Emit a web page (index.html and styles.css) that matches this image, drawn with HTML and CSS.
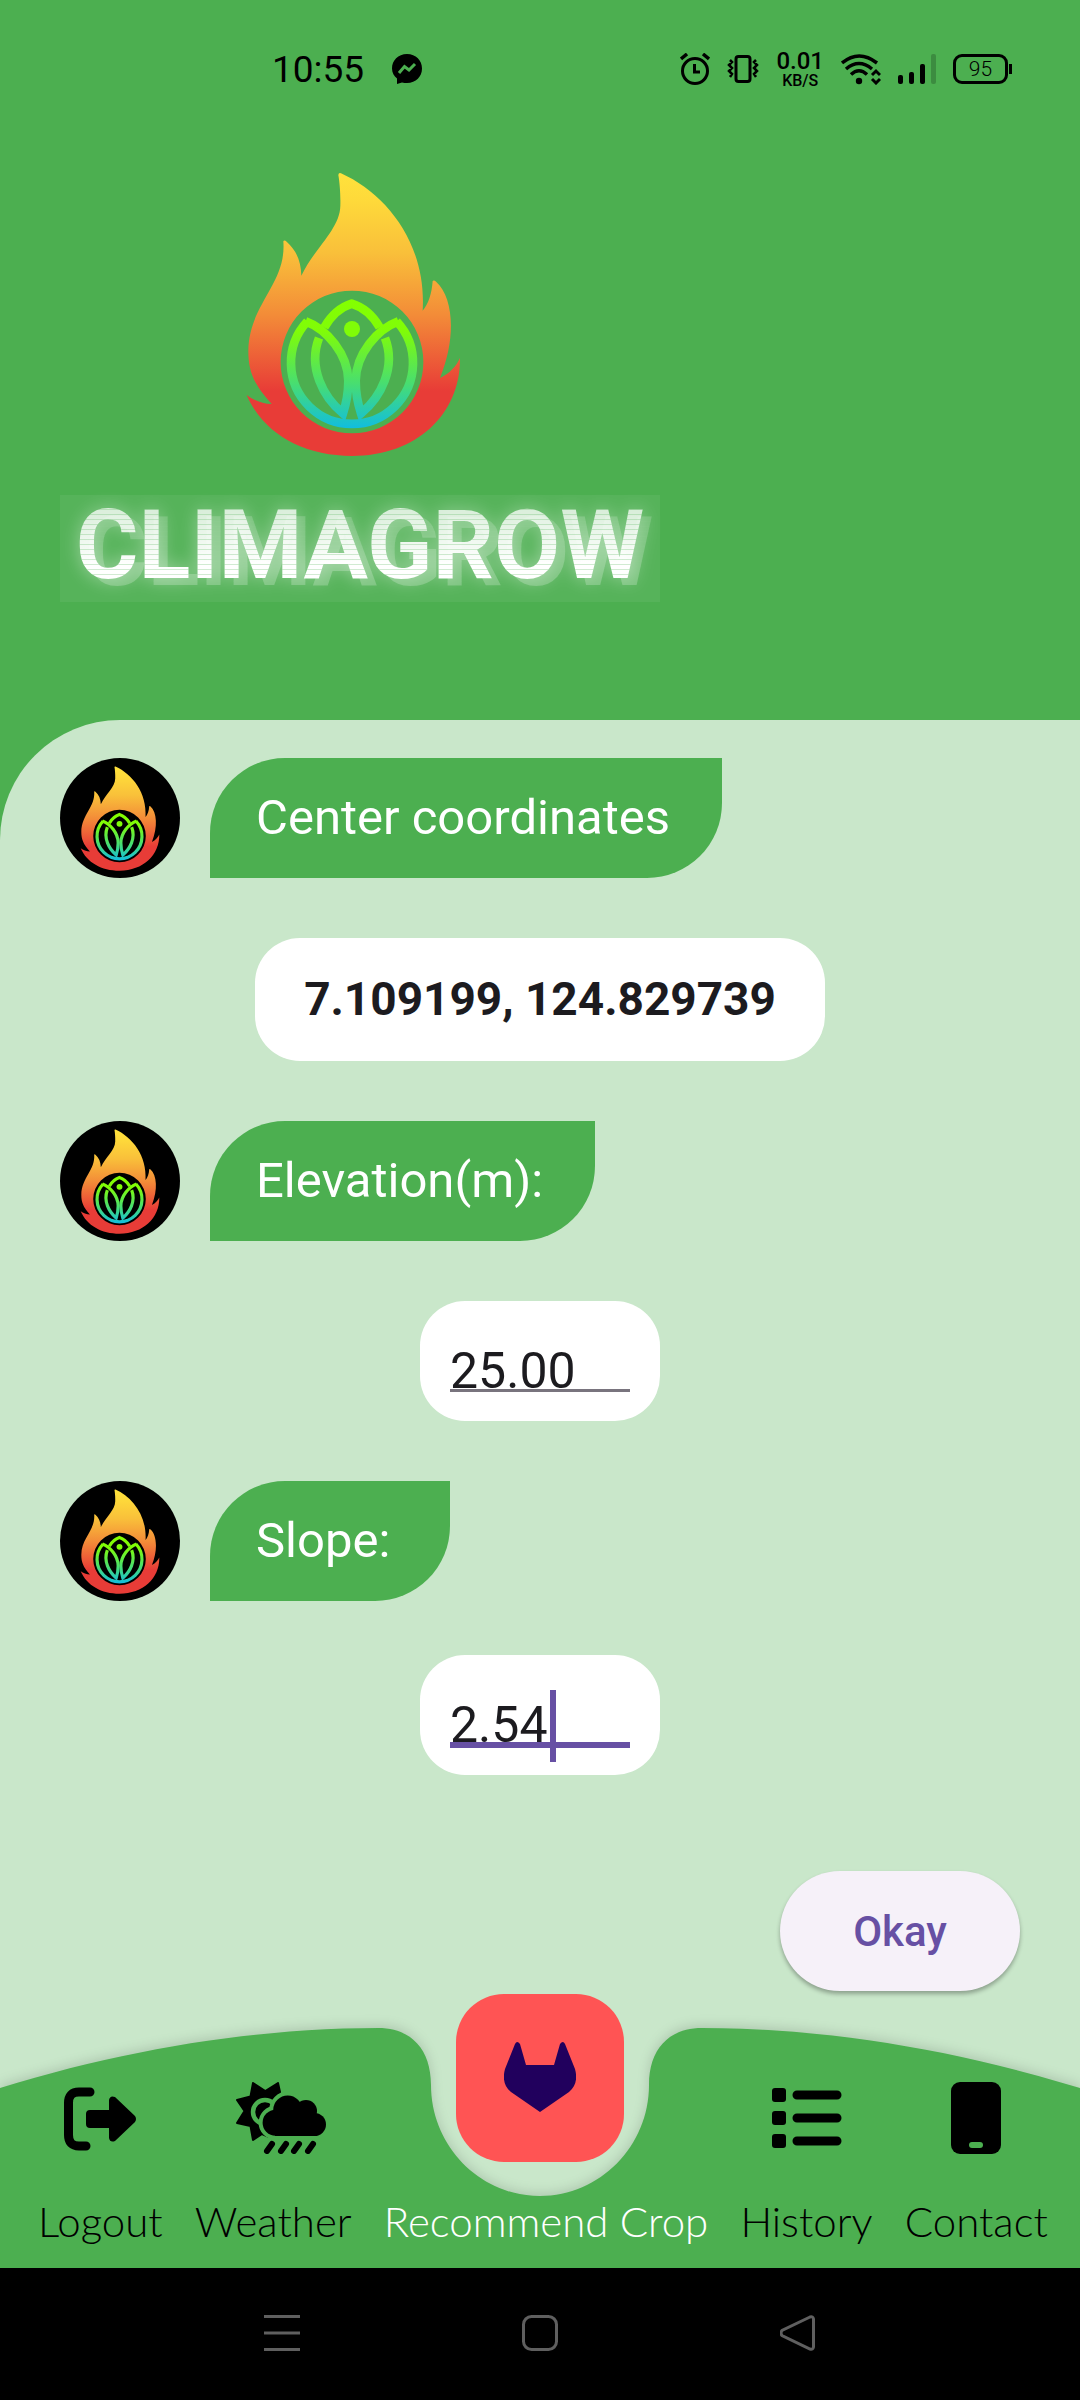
FILE: index.html
```html
<!DOCTYPE html>
<html lang="en">
<head>
<meta charset="utf-8">
<meta name="viewport" content="width=device-width, initial-scale=1">
<title>ClimaGrow</title>
<link rel="stylesheet" href="styles.css">
</head>
<body>
<svg class="defs" aria-hidden="true">
  <defs>
    <linearGradient id="fire" gradientUnits="userSpaceOnUse" x1="0" y1="67" x2="0" y2="916">
      <stop offset="0" stop-color="#ffe23c"/>
      <stop offset=".1" stop-color="#fed93a"/>
      <stop offset=".28" stop-color="#f9c03a"/>
      <stop offset=".5" stop-color="#f38c38"/>
      <stop offset=".77" stop-color="#e83c37"/>
      <stop offset="1" stop-color="#e83c37"/>
    </linearGradient>
    <linearGradient id="leaf" gradientUnits="userSpaceOnUse" x1="0" y1="445" x2="0" y2="834">
      <stop offset="0" stop-color="#84ff00"/>
      <stop offset=".25" stop-color="#80fc08"/>
      <stop offset=".65" stop-color="#48de70"/>
      <stop offset="1" stop-color="#10bde0"/>
    </linearGradient>
    <g id="flame">
      <path fill="url(#fire)" fill-rule="evenodd" d="M355 73Q356 65 363 68C500 130 620 280 608 480C625 460 635 430 638 391Q642 387 649 394C700 440 710 560 660 682C690 668 710 645 720 622C722 790 590 916 396 916C250 916 130 850 80 733C100 748 128 760 155 760C100 700 85 660 85 600C87 460 200 400 190 272Q193 267 200 273C228 298 243 330 244 375C285 290 360 235 361 165C362 130 359 95 355 73ZM396 420A214 214 0 1 0 396 848A214 214 0 1 0 396 420Z"/>
      <g fill="none" stroke="url(#leaf)" stroke-width="26">
        <path d="M262 512A183 183 0 1 0 530 512"/>
        <path d="M257 512C320 535 384 610 385 690C385 725 380 755 369 788C310 740 263 650 297 562"/>
        <path d="M535 512C472 535 408 610 407 690C407 725 412 755 423 788C482 740 529 650 495 562"/>
        <path d="M313 530Q345 475 395 459Q447 475 479 530"/>
      </g>
      <circle cx="396" cy="535" r="24" fill="#80fc08"/>
    </g>
  </defs>
</svg>

<div class="app">
  <header class="header">
    <div class="status">
      <div class="status-left">
        <time>10:55</time>
        <svg width="30" height="30" viewBox="0 0 30 30"><path d="M15 0C6 0 0 6.500 0 14.500C0 19 2 22 5 24.500V30L10 28.500Q12.500 29 15 29C24 29 30 22.500 30 14.500S24 0 15 0Z"/><path d="M7 19L12.500 12.500L17 16L23 10" fill="none" stroke="#4caf50" stroke-width="3"/></svg>
      </div>
      <div class="status-right">
        <svg width="30" height="32" viewBox="0 0 30 32" fill="none" stroke="#000" stroke-width="3"><circle cx="15" cy="18" r="12.500"/><path d="M14.500 11V19H20"/><path d="M1 6L7 1M29 6L23 1" stroke-width="3.500"/></svg>
        <svg width="32" height="28" viewBox="0 0 32 28" fill="none" stroke="#000" stroke-width="3"><rect x="9" y="1.500" width="14" height="25" rx="2.500"/><path stroke-width="2.500" d="M3 5L5 7L2 10L5 13L2 16L5 19L3 22M29 5L27 7L30 10L27 13L30 16L27 19L29 22"/></svg>
        <div class="speed"><span class="speed-value">0.01</span><span class="speed-unit">KB/S</span></div>
        <svg width="40" height="31" viewBox="0 0 40 31" fill="none" stroke="#000" stroke-width="3.500"><path d="M1 9Q18 -5 36 9M5 15Q18 4 31 15M10 20.500Q18 13 26 20.500"/><circle cx="18" cy="27" r="3.200" fill="#000" stroke="none"/><path stroke-width="3" d="M31 21L35 17L39 21M31 25L35 29L39 25"/></svg>
        <svg width="38" height="30" viewBox="0 0 38 30"><rect y="21" width="5" height="9" rx="2"/><rect x="11" y="18" width="5" height="12" rx="2"/><rect x="22" y="10" width="5" height="20" rx="2"/><rect x="33" width="5" height="30" rx="2" fill-opacity=".2"/></svg>
        <div class="battery">95</div>
      </div>
    </div>
    <div class="brand">
      <svg class="brand-flame" viewBox="75 64 690 855" role="img" aria-label="Flame logo"><use href="#flame"/></svg>
      <h1 class="wordmark"><span>CLIMAGROW</span></h1>
    </div>
  </header>

  <div class="stage">
    <main class="panel">
      <form class="chat">
        <section class="exchange">
          <div class="message">
            <div class="avatar"><svg viewBox="75 64 650 855"><use href="#flame"/></svg></div>
            <p class="bubble">Center coordinates</p>
          </div>
          <output class="answer coords">7.109199, 124.829739</output>
        </section>
        <section class="exchange">
          <div class="message">
            <div class="avatar"><svg viewBox="75 64 650 855"><use href="#flame"/></svg></div>
            <label class="bubble" for="elevation">Elevation(m):</label>
          </div>
          <div class="answer field"><input id="elevation" type="text" inputmode="decimal" value="25.00"></div>
        </section>
        <section class="exchange exchange-current">
          <div class="message">
            <div class="avatar"><svg viewBox="75 64 650 855"><use href="#flame"/></svg></div>
            <label class="bubble" for="slope">Slope:</label>
          </div>
          <div class="answer field field-focused"><input id="slope" type="text" inputmode="decimal" value="2.54"><span class="caret"></span></div>
        </section>
        <button class="okay" type="button">Okay</button>
      </form>

      <nav class="tabs">
        <svg class="tabs-shape" viewBox="0 0 1080 240" preserveAspectRatio="none"><path d="M0 60C130 20 260 0 378 0C412 0 431 22 431 57C431 118 480 168 540 168C600 168 649 118 649 57C649 22 668 0 702 0C820 0 950 20 1080 60V240H0Z" fill="#4caf50"/></svg>
        <a class="tab" href="#logout">
          <svg width="72" height="72" viewBox="0 0 72 72"><path d="M26 10H15Q4.500 10 4.500 21V53Q4.500 64 15 64H22" fill="none" stroke="#000" stroke-width="9" stroke-linecap="round"/><path d="M26 28H45V18Q46 13 51 15L71 34Q73 37 71 40L51 59Q46 61 45 56V46H26Q22 46 22 42V32Q22 28 26 28Z"/></svg>
          Logout
        </a>
        <a class="tab" href="#weather">
          <svg width="107" height="72" viewBox="-16 0 107 72"><path stroke="#000" stroke-width="2" stroke-linejoin="round" d="M17 1L29.300 9L42 1L44 10L40 58L26 52L17 58L14.500 44L1 41L8.500 29L1 18L14.500 14.500Z"/><circle cx="29" cy="30" r="12" stroke="#4caf50" stroke-width="4.500"/><g stroke="#4caf50" stroke-width="9"><circle cx="39.600" cy="40.700" r="12.500"/><circle cx="51.700" cy="28" r="14"/></g><path fill="#4caf50" d="M36 54H60V62H22Z"/><circle cx="39.600" cy="40.700" r="13"/><circle cx="51.700" cy="28" r="14.500"/><circle cx="70" cy="29" r="11"/><circle cx="78.500" cy="42.500" r="11.500"/><rect x="39" y="28" width="40" height="26"/><path d="M36 62L31 69M50 62L45 69M63 62L58 69M77 62L72 69" stroke="#000" stroke-width="6" stroke-linecap="round"/></svg>
          Weather
        </a>
        <a class="tab tab-active" href="#recommend" aria-current="page">
          <span class="fab"><svg width="72" height="72" viewBox="0 0 72 72"><path fill="#21005d" d="M11 2Q13-2 16 2L22 23H50L56 2Q59-2 61 2L71 27Q75 42 65 50L36 70L7 50Q-3 42 1 27Z"/></svg></span>
          Recommend Crop
        </a>
        <a class="tab" href="#history">
          <svg width="72" height="72" viewBox="0 0 72 72"><g><rect x="1" y="6" width="14" height="14" rx="3"/><rect x="1" y="29" width="14" height="14" rx="3"/><rect x="1" y="52" width="14" height="14" rx="3"/></g><path d="M26 13H66M26 36H66M26 59H66" stroke="#000" stroke-width="9" stroke-linecap="round"/></svg>
          History
        </a>
        <a class="tab" href="#contact">
          <svg width="72" height="72" viewBox="0 0 72 72"><rect x="11" width="50" height="72" rx="9"/><rect x="29" y="60" width="14" height="6" rx="3" fill="#4caf50"/></svg>
          Contact
        </a>
      </nav>
    </main>
  </div>

  <footer class="system">
    <button type="button" aria-label="Recent apps"><svg width="36" height="36" viewBox="0 0 36 36"><path d="M0 1.500H36M0 18H36M0 34.500H36"/></svg></button>
    <button type="button" aria-label="Home"><svg width="36" height="36" viewBox="0 0 36 36"><rect x="1.500" y="1.500" width="33" height="33" rx="8"/></svg></button>
    <button type="button" aria-label="Back"><svg width="36" height="36" viewBox="0 0 36 36"><path d="M30 2L2 15.500Q0 18 2 20.500L30 34Q33 35 33.500 32V4Q33 1 30 2Z"/></svg></button>
  </footer>
</div>
</body>
</html>
```
FILE: styles.css
```css
* {
  box-sizing: border-box;
}

body {
  margin: 0;
  font-family: Roboto, "Noto Sans", sans-serif;
  color: #1c1b1f;
}

.defs {
  position: absolute;
  width: 0;
  height: 0;
}

.app {
  display: flex;
  flex-direction: column;
  min-height: 100vh;
}

/* Header */
.header {
  background: #4caf50;
  padding-bottom: 118px;
}

.status {
  display: flex;
  justify-content: space-between;
  align-items: center;
  height: 138px;
  padding: 0 72px 0 272px;
  color: #000;
}

.status-left,
.status-right {
  display: flex;
  align-items: center;
}

.status-left {
  gap: 28px;
  font-size: 37px;
}

.status-right {
  gap: 17px;
}

.speed {
  display: flex;
  flex-direction: column;
  align-items: center;
  font-weight: 500;
}

.speed-value {
  font-size: 24px;
  line-height: 24px;
}

.speed-unit {
  font-size: 16px;
  line-height: 16px;
}

.battery {
  position: relative;
  width: 55px;
  height: 30px;
  border: 3px solid #000;
  border-radius: 9px;
  font-size: 21px;
  font-weight: 300;
  line-height: 24px;
  text-align: center;
}

.battery::after {
  content: "";
  position: absolute;
  right: -7px;
  top: 7px;
  width: 3px;
  height: 10px;
  background: #000;
}

.brand {
  display: flex;
  flex-direction: column;
  align-items: center;
  gap: 38px;
  width: 600px;
  max-width: 100%;
  margin: 34px 0 0 60px;
}

.brand-flame {
  width: 230px;
  height: 285px;
}

.wordmark {
  width: 100%;
  margin: 0;
  padding-bottom: 7px;
  background: rgba(255, 255, 255, .06);
  font-size: 96px;
  font-weight: 700;
  line-height: 100px;
  text-align: center;
}

.wordmark span {
  display: block;
  color: transparent;
  background: repeating-linear-gradient(transparent 0 4px, rgba(76, 175, 80, .25) 4px 5px),
    linear-gradient(rgba(255, 255, 255, .75) 20%, #fff 70%);
  -webkit-background-clip: text;
  background-clip: text;
  filter: drop-shadow(9px 7px 0 rgba(255, 255, 255, .22)) drop-shadow(0 0 9px rgba(255, 255, 255, .45));
}

/* Conversation */
.stage {
  display: flex;
  flex: 1;
  background: #4caf50;
}

.panel {
  display: flex;
  flex: 1;
  flex-direction: column;
  justify-content: space-between;
  gap: 36px;
  padding-top: 38px;
  background: #c9e7ca;
  border-top-left-radius: 120px;
}

.chat,
.exchange {
  display: flex;
  flex-direction: column;
  gap: 60px;
}

.chat {
  padding: 0 60px;
}

.exchange-current {
  gap: 54px;
}

.message {
  display: flex;
  gap: 30px;
}

.avatar {
  display: flex;
  align-items: center;
  justify-content: center;
  width: 120px;
  height: 120px;
  border-radius: 50%;
  background: #000;
}

.avatar svg {
  width: 80px;
  height: 105px;
}

.bubble {
  min-width: 240px;
  margin: 0;
  padding: 0 52px 0 46px;
  border-radius: 75px 0;
  background: #4caf50;
  color: #fff;
  font-size: 49px;
  line-height: 120px;
}

.answer {
  align-self: center;
  border-radius: 45px;
  background: #fff;
}

.coords {
  padding: 0 49px;
  font-size: 46px;
  font-weight: 700;
  line-height: 123px;
}

.field {
  position: relative;
  width: 240px;
  height: 120px;
  padding: 40px 30px 0;
}

.field input {
  display: block;
  width: 100%;
  height: 60px;
  padding: 0;
  border: 0;
  outline: 0;
  background: linear-gradient(#79747e, #79747e) no-repeat 0 48px / 100% 3px;
  color: inherit;
  font: inherit;
  font-size: 50px;
}

.field-focused input {
  background: linear-gradient(#6750a4, #6750a4) no-repeat 0 47px / 100% 6px;
}

.caret {
  position: absolute;
  left: 130px;
  top: 35px;
  width: 6px;
  height: 72px;
  background: #6750a4;
}

.okay {
  align-self: flex-end;
  width: 240px;
  height: 120px;
  margin-top: 36px;
  border: 0;
  border-radius: 60px;
  background: #f6f1f9;
  box-shadow: 0 3px 4px rgba(0, 0, 0, .3);
  color: #6750a4;
  font: 500 42px Roboto, sans-serif;
}

/* Bottom tabs */
.tabs {
  position: relative;
  isolation: isolate;
  display: flex;
  justify-content: space-evenly;
  height: 240px;
  padding: 54px 0 0 6px;
}

.tabs-shape {
  position: absolute;
  z-index: -1;
  inset: 0;
  width: 100%;
  height: 100%;
  overflow: visible;
  filter: drop-shadow(0 -2px 6px rgba(0, 0, 0, .15));
  clip-path: inset(-40px 0 0 0);
}

.tab {
  display: flex;
  flex-direction: column;
  align-items: center;
  justify-content: space-between;
  height: 164px;
  color: #000;
  font-family: Lato, sans-serif;
  font-size: 42px;
  font-weight: 300;
  line-height: 50px;
  text-decoration: none;
  white-space: nowrap;
}

.tab-active {
  justify-content: flex-end;
  color: #fff;
}

/* Floats in the notch of the bar */
.fab {
  position: absolute;
  top: -34px;
  left: calc(50% - 84px);
  display: flex;
  align-items: center;
  justify-content: center;
  width: 168px;
  height: 168px;
  border-radius: 48px;
  background: #ff5454;
}

/* Android system bar */
.system {
  display: flex;
  justify-content: space-evenly;
  height: 132px;
  padding: 0 62px;
  background: #000;
}

.system button {
  padding: 0 20px;
  border: 0;
  background: none;
}

.system svg {
  fill: none;
  stroke: #5f5f5f;
  stroke-width: 3px;
}
```
